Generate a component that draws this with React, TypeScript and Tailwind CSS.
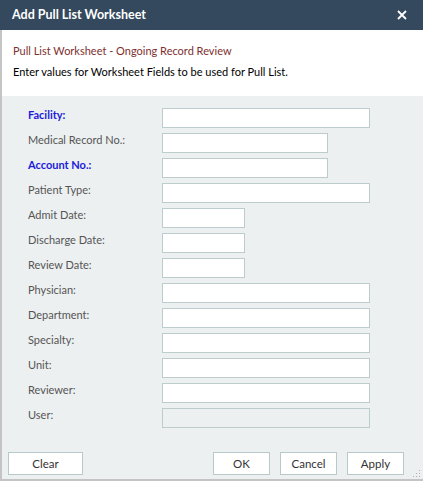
const fields: { label: string; size: "full" | "mid" | "sm"; required?: boolean; disabled?: boolean }[] = [
  { label: "Facility:", size: "full", required: true },
  { label: "Medical Record No.:", size: "mid" },
  { label: "Account No.:", size: "mid", required: true },
  { label: "Patient Type:", size: "full" },
  { label: "Admit Date:", size: "sm" },
  { label: "Discharge Date:", size: "sm" },
  { label: "Review Date:", size: "sm" },
  { label: "Physician:", size: "full" },
  { label: "Department:", size: "full" },
  { label: "Specialty:", size: "full" },
  { label: "Unit:", size: "full" },
  { label: "Reviewer:", size: "full" },
  { label: "User:", size: "full", disabled: true },
]

const widths = { full: "w-[208px]", mid: "w-[166px]", sm: "w-[83px]" }

function Button({ children, wide }: { children: string; wide?: boolean }) {
  return (
    <button
      className={`${wide ? "w-[75px]" : "w-[57px]"} h-[23px] bg-white border border-[#b9c9c9] text-[11.5px] text-[#333]`}
    >
      {children}
    </button>
  )
}

export default function App() {
  return (
    <div className="w-[423px] h-[483px] bg-white flex flex-col font-['Lato',sans-serif] text-[11px]">
      {/* Title bar */}
      <div className="h-[30px] bg-[#34495e] flex items-center justify-between pl-[12px] pr-[16px] shrink-0">
        <span className="text-white font-bold text-[12.5px]">Add Pull List Worksheet</span>
        <svg width="10" height="10" viewBox="0 0 10 10">
          <path d="M1 1L9 9M9 1L1 9" stroke="white" strokeWidth="1.8" />
        </svg>
      </div>

      <div className="h-[451px] border-l-2 border-b-2 border-[#c4c4c4] flex flex-col">
        {/* Header */}
        <div className="h-[66px] bg-white pt-[10px] pl-[11px] leading-[21px] shrink-0">
          <div className="text-[#7e3030]">Pull List Worksheet - Ongoing Record Review</div>
          <div className="text-black">Enter values for Worksheet Fields to be used for Pull List.</div>
        </div>

        {/* Form */}
        <div className="flex-1 bg-[#ecf0f1] pt-[12px] flex flex-col relative">
          <div className="flex flex-col gap-[5px] pl-[26px]">
            {fields.map((f) => (
              <div key={f.label} className="flex h-[20px]">
                <label
                  className={`w-[134px] leading-[14px] ${
                    f.required ? "text-[#1b1bdc] font-bold" : "text-[#555]"
                  }`}
                >
                  {f.label}
                </label>
                <input
                  disabled={f.disabled}
                  className={`${widths[f.size]} h-[20px] border border-[#bccbcb] ${
                    f.disabled ? "bg-[#ecf0f1]" : "bg-white"
                  } outline-none`}
                />
              </div>
            ))}
          </div>

          <div className="flex items-center mt-[24px] pl-[6px] pr-[19px]">
            <Button wide>Clear</Button>
            <div className="flex-1" />
            <div className="flex gap-[10px]">
              <Button>OK</Button>
              <Button>Cancel</Button>
              <Button>Apply</Button>
            </div>
          </div>

          {/* resize grip */}
          <svg className="absolute right-[2px] bottom-[1px]" width="9" height="9" viewBox="0 0 9 9">
            <rect x="7" y="1" width="1" height="1" fill="#b0b0b0" />
            <rect x="4" y="4" width="1" height="1" fill="#b0b0b0" />
            <rect x="7" y="4" width="1" height="1" fill="#b0b0b0" />
            <rect x="1" y="7" width="1" height="1" fill="#b0b0b0" />
            <rect x="4" y="7" width="1" height="1" fill="#b0b0b0" />
            <rect x="7" y="7" width="1" height="1" fill="#b0b0b0" />
          </svg>
        </div>
      </div>
    </div>
  )
}
